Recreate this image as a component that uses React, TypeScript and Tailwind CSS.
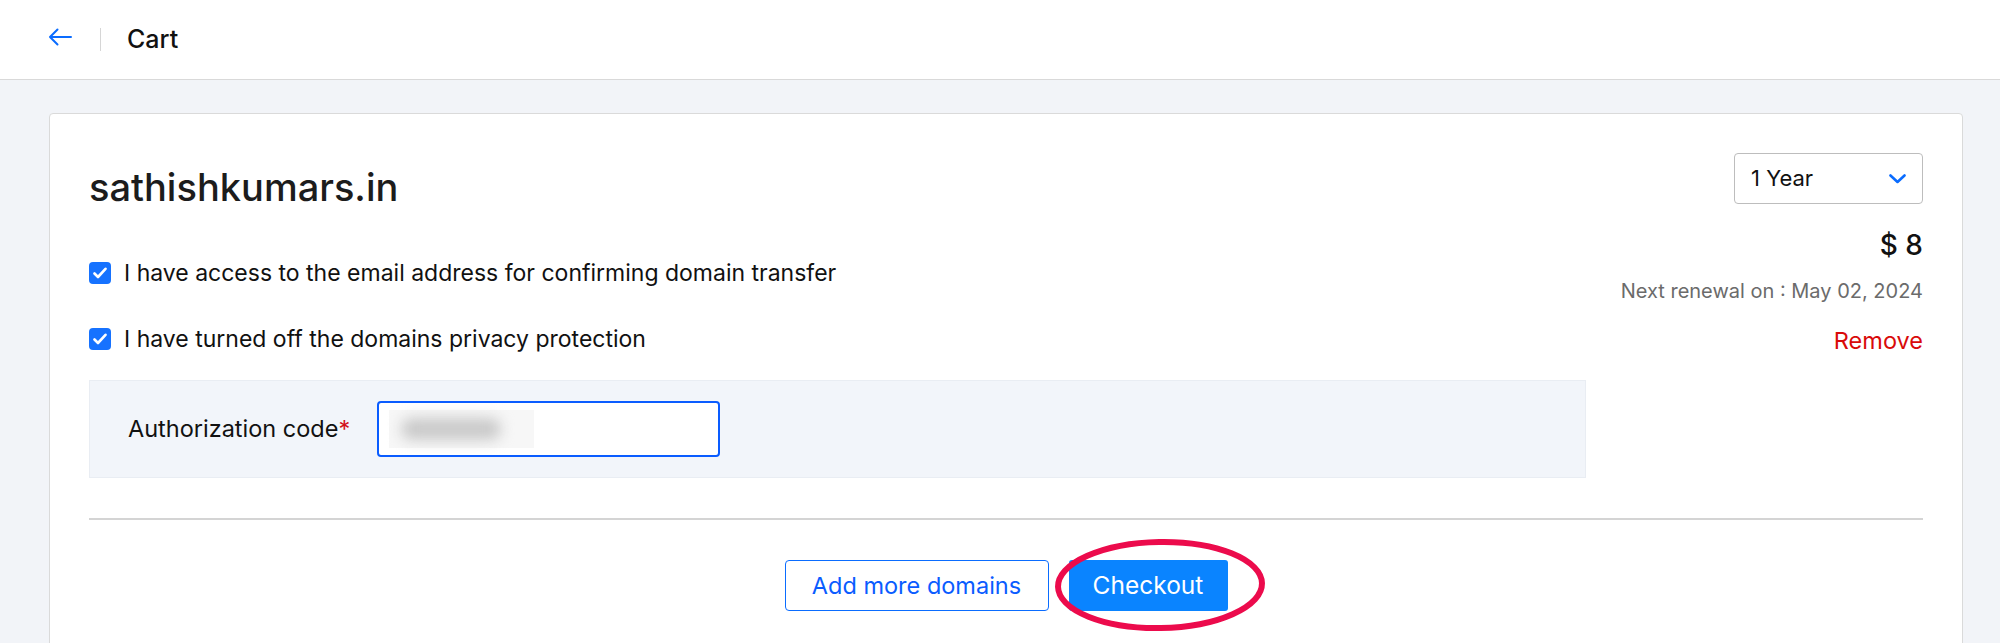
import React from "react"

const font = {fontFamily: "Inter, 'Noto Sans', sans-serif"}

const CheckRow = ({label}: {label: string}) => (
  <label className="flex h-10 items-center gap-[13px] text-[23px] text-[#111]">
    <span className="flex h-[22px] w-[22px] items-center justify-center rounded-[4px] bg-[#1672ff]">
      <svg width="14" height="12" viewBox="0 0 14 12" fill="none">
        <path d="M1.5 6.5 L5 10 L12.5 1.8" stroke="white" strokeWidth="2.6" strokeLinecap="round" strokeLinejoin="round" />
      </svg>
    </span>
    {label}
  </label>
)

export default function App() {
  return (
    <div className="min-h-[643px] bg-[#f2f4f8]" style={font}>
      {/* top bar */}
      <header className="flex h-20 items-center border-b border-[#d9d9d9] bg-white pl-12">
        <svg width="24" height="18" viewBox="0 0 24 18" fill="none" className="mt-[-6px]">
          <path d="M23 9 H2 M9.5 1.5 L2 9 L9.5 16.5" stroke="#0a6cff" strokeWidth="2" strokeLinecap="round" strokeLinejoin="round" />
        </svg>
        <span className="ml-7 h-[23px] w-px bg-[#d6d6d6]" />
        <h1 className="ml-[26px] text-[25px] font-medium text-[#111]">Cart</h1>
      </header>

      <main className="pt-[33px] pr-[37px] pl-[49px]">
        <section className="rounded-t-[4px] border border-[#dadada] bg-white px-[39px] pt-[39px] pb-10">
          <div className="flex justify-between">
            <div className="w-[1497px]">
              <h2 className="mt-[10px] text-[38px] leading-[48px] font-medium text-[#1c1c1c]">sathishkumars.in</h2>
              <div className="mt-[42px]">
                <CheckRow label="I have access to the email address for confirming domain transfer" />
              </div>
              <div className="mt-[26px]">
                <CheckRow label="I have turned off the domains privacy protection" />
              </div>
              <div className="mt-[21px] flex h-[98px] items-center border border-[#e9edf3] bg-[#f2f5fa] pl-[38px]">
                <span className="text-[23.5px] text-[#111]">
                  Authorization code<span className="text-[#d3101a]">*</span>
                </span>
                <div className="ml-[27px] flex h-[56px] w-[343px] items-center rounded-[4px] border-2 border-[#0a5cff] bg-white pl-[10px]">
                  <div className="flex h-[38px] w-[145px] items-center bg-[#f7f7f7] pl-3">
                    <div className="h-[22px] w-[100px] rounded-full bg-[#c9c9c9] blur-[7px]" />
                  </div>
                </div>
              </div>
            </div>

            <div className="flex flex-col items-end">
              <button className="flex h-[51px] w-[189px] items-center justify-between rounded-[4px] border border-[#bdbdbd] bg-white pr-4 pl-4 text-[22px] text-[#111]">
                1 Year
                <svg width="17" height="10" viewBox="0 0 17 10" fill="none">
                  <path d="M1.5 1.5 L8.5 8 L15.5 1.5" stroke="#0a6cff" strokeWidth="2.6" strokeLinecap="round" strokeLinejoin="round" />
                </svg>
              </button>
              <div className="mt-[23px] text-[28px] leading-9 font-medium text-[#111]">$ 8</div>
              <div className="mt-[14px] text-[20px] leading-7 text-[#6b6b6b]">Next renewal on : May 02, 2024</div>
              <button className="mt-[21px] text-[23.5px] leading-[30px] text-[#d90a0a]">Remove</button>
            </div>
          </div>

          <div className="mt-10 h-[2px] bg-[#d4d4d4]" />

          <div className="mt-10 flex justify-center gap-5">
            <button className="h-[51px] w-[264px] rounded-[4px] border-[1.5px] border-[#0a6cff] bg-white text-[23.5px] text-[#0a5cff]">
              Add more domains
            </button>
            <div className="relative">
              <button className="h-[51px] w-[159px] rounded-[3px] bg-[#0a84ff] text-[24.5px] text-white">Checkout</button>
              <svg
                width="214"
                height="96"
                viewBox="0 0 214 96"
                fill="none"
                className="pointer-events-none absolute top-[-23px] left-[-16px]"
              >
                <ellipse cx="107" cy="48" rx="102" ry="43" stroke="#ec0b4c" strokeWidth="6" transform="rotate(-1 107 48)" />
              </svg>
            </div>
          </div>
        </section>
      </main>
    </div>
  )
}
